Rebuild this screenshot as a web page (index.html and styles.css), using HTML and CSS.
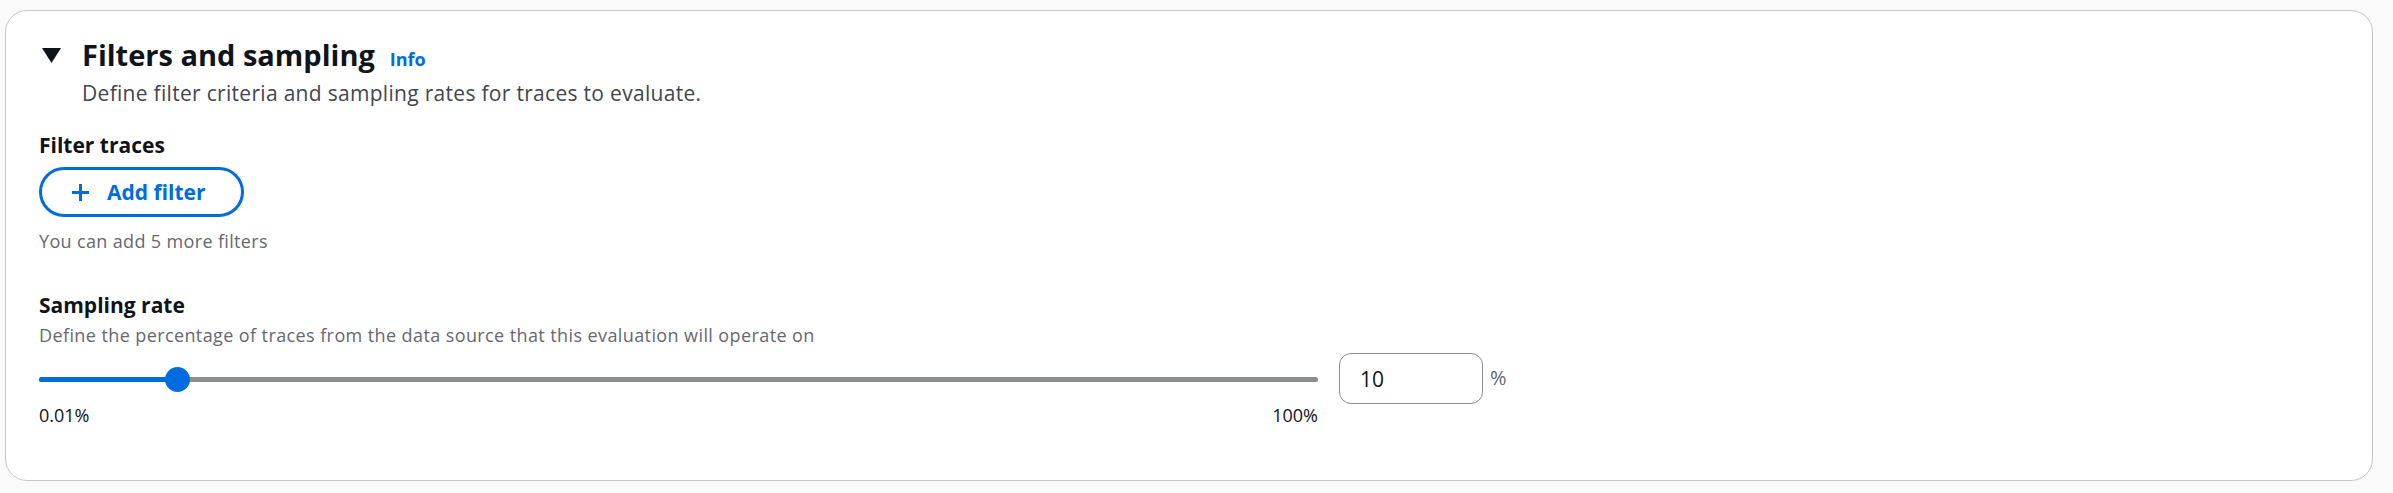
FILE: index.html
```html
<!DOCTYPE html>
<html lang="en">
<head>
<meta charset="utf-8">
<title>Filters and sampling</title>
<link rel="stylesheet" href="styles.css">
</head>
<body>
<section class="container">
  <header class="header">
    <div class="title-row">
      <svg class="caret" width="19" height="15" viewBox="0 0 19 15" aria-hidden="true"><path d="M0 0 H19 L9.5 15 Z" fill="#0f141a"/></svg>
      <h2 class="title">Filters and sampling</h2>
      <a class="info" href="#">Info</a>
    </div>
    <p class="description">Define filter criteria and sampling rates for traces to evaluate.</p>
  </header>

  <div class="field">
    <div class="label">Filter traces</div>
    <button class="btn" type="button">
      <svg class="plus" width="19" height="19" viewBox="0 0 19 19" aria-hidden="true"><path d="M9.5 1 V18 M1 9.5 H18" stroke="#006ce0" stroke-width="3" fill="none"/></svg>
      <span>Add filter</span>
    </button>
    <div class="hint">You can add 5 more filters</div>
  </div>

  <div class="field sampling">
    <div class="label">Sampling rate</div>
    <div class="field-desc">Define the percentage of traces from the data source that this evaluation will operate on</div>
    <div class="slider-row">
      <div class="slider">
        <div class="track-area">
          <div class="track">
            <div class="fill" style="width: 10.8%"></div>
            <div class="thumb" style="left: 10.8%"></div>
          </div>
        </div>
        <div class="ticks"><span>0.01%</span><span>100%</span></div>
      </div>
      <input class="num" type="text" value="10">
      <span class="unit">%</span>
    </div>
  </div>
</section>
</body>
</html>
```
FILE: styles.css
```css
* { box-sizing: border-box; }
html, body { margin: 0; padding: 0; }
body {
  background: #fafafa;
  font-family: "Open Sans", Lato, "Liberation Sans", sans-serif;
  color: #0f141a;
  padding: 10px 20px 0 5px;
  width: 2393px;
  height: 493px;
  overflow: hidden;
}
.container {
  background: #ffffff;
  border: 1px solid #c6c6cd;
  border-radius: 22px;
  height: 471px;
  padding: 26px 33px 0 33px;
}
.title-row {
  display: flex;
  align-items: baseline;
  height: 36px;
}
.caret {
  align-self: center;
  margin-left: 3px;
  margin-right: 21px;
  margin-top: 1px;
  flex: none;
}
.title {
  margin: 0;
  font-size: 29px;
  line-height: 36px;
  font-weight: 700;
  color: #0f141a;
}
.info {
  margin-left: 15px;
  font-size: 18px;
  font-weight: 700;
  color: #006ce0;
  text-decoration: none;
}
.description {
  margin: 5px 0 0 43px;
  font-size: 21px;
  line-height: 30px;
  letter-spacing: 0.3px;
  color: #424650;
}
.field { margin-top: 22px; }
.label {
  font-size: 21px;
  line-height: 30px;
  font-weight: 700;
  color: #0f141a;
}
.btn {
  margin-top: 7px;
  display: flex;
  align-items: center;
  height: 50px;
  padding: 0 35px 0 29px;
  border: 3px solid #006ce0;
  border-radius: 25px;
  background: #ffffff;
  color: #006ce0;
  font-family: inherit;
  font-size: 21px;
  font-weight: 700;
}
.plus { margin-right: 17px; flex: none; }
.hint {
  margin-top: 12px;
  font-size: 18px;
  line-height: 24px;
  letter-spacing: 0.35px;
  color: #656871;
}
.sampling { margin-top: 37px; }
.field-desc {
  margin-top: 3px;
  font-size: 18px;
  line-height: 24px;
  letter-spacing: 0.4px;
  color: #656871;
}
.slider-row {
  display: flex;
  align-items: flex-start;
  margin-top: 6px;
}
.slider {
  width: 1279px;
  margin-top: 13px;
  flex: none;
}
.track-area {
  height: 26px;
  display: flex;
  align-items: center;
}
.track {
  position: relative;
  width: 100%;
  height: 5px;
  border-radius: 3px;
  background: #8c8c94;
}
.fill {
  height: 100%;
  border-radius: 3px;
  background: #006ce0;
}
.thumb {
  position: absolute;
  top: 50%;
  width: 25px;
  height: 25px;
  margin: -12.5px 0 0 -12.5px;
  border-radius: 50%;
  background: #006ce0;
}
.ticks {
  display: flex;
  justify-content: space-between;
  margin-top: 11px;
  font-size: 18px;
  line-height: 24px;
  color: #0f141a;
}
.num {
  margin-left: 21px;
  width: 144px;
  height: 51px;
  border: 1px solid #8c8c94;
  border-radius: 12px;
  padding: 0 0 0 20px;
  font-family: inherit;
  font-size: 21px;
  color: #0f141a;
  background: #ffffff;
  outline: none;
}
.unit {
  margin-left: 7px;
  margin-top: 12px;
  font-size: 20px;
  line-height: 26px;
  color: #656871;
}
```
